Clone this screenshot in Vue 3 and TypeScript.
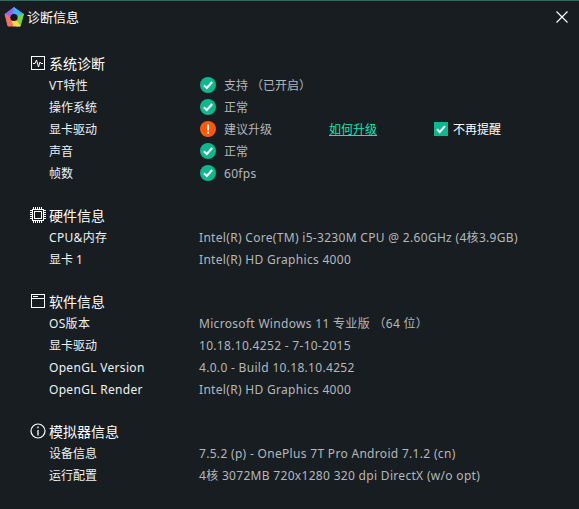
<script setup lang="ts">
interface Row { label: string; value: string; status?: 'ok' | 'warn'; latin?: boolean; labelLatin?: boolean }
interface Section { title: string; icon: string; rows: Row[] }
const sections: Section[] = [
  { title: '系统诊断', icon: 'pulse', rows: [
    { label: 'VT特性', value: '支持 （已开启）', status: 'ok', labelLatin: true },
    { label: '操作系统', value: '正常', status: 'ok' },
    { label: '显卡驱动', value: '建议升级', status: 'warn' },
    { label: '声音', value: '正常', status: 'ok' },
    { label: '帧数', value: '60fps', status: 'ok', latin: true },
  ] },
  { title: '硬件信息', icon: 'chip', rows: [
    { label: 'CPU&内存', value: 'Intel(R) Core(TM) i5-3230M CPU @ 2.60GHz (4核3.9GB)', latin: true, labelLatin: true },
    { label: '显卡 1', value: 'Intel(R) HD Graphics 4000', latin: true },
  ] },
  { title: '软件信息', icon: 'window', rows: [
    { label: 'OS版本', value: 'Microsoft Windows 11 专业版 （64 位）', latin: true, labelLatin: true },
    { label: '显卡驱动', value: '10.18.10.4252 - 7-10-2015', latin: true },
    { label: 'OpenGL Version', value: '4.0.0 - Build 10.18.10.4252', latin: true, labelLatin: true },
    { label: 'OpenGL Render', value: 'Intel(R) HD Graphics 4000', latin: true, labelLatin: true },
  ] },
  { title: '模拟器信息', icon: 'info', rows: [
    { label: '设备信息', value: '7.5.2 (p) - OnePlus 7T Pro Android 7.1.2 (cn)', latin: true },
    { label: '运行配置', value: '4核 3072MB 720x1280 320 dpi DirectX (w/o opt)', latin: true },
  ] },
]
</script>

<template>
  <div class="dialog">
    <header class="titlebar">
      <svg class="logo" width="22" height="22" viewBox="0 0 22 22" stroke-linejoin="round" stroke-width="1">
        <path d="M11 1.5 L2 8.2 L7 11 L11 7 Z" fill="#8f68f2" stroke="#8f68f2" />
        <path d="M11 1.5 L20.5 8.2 L15 10.5 L11 7 Z" fill="#3fb2ee" stroke="#3fb2ee" />
        <path d="M20.5 8.2 L17.2 20 L13 20 L15 10.5 Z" fill="#7bd13f" stroke="#7bd13f" />
        <path d="M17.2 20 L10 20 L8 15 L13 14 Z" fill="#f8d94a" stroke="#f8d94a" />
        <path d="M10 20 L5 20 L2 8.2 L7 11 L8 15 Z" fill="#f4716a" stroke="#f4716a" />
        <circle cx="11" cy="11.5" r="3.6" fill="#14181b" />
      </svg>
      <span class="title">诊断信息</span>
      <svg class="close" width="12" height="12" viewBox="0 0 12 12">
        <path d="M0.5 0.5 L11.5 11.5 M11.5 0.5 L0.5 11.5" stroke="#fff" stroke-width="1.2" fill="none" />
      </svg>
    </header>
    <main class="content">
      <section v-for="s in sections" :key="s.title" class="section">
        <div class="row head">
          <svg class="sec-icon" width="16" height="16" viewBox="0 0 16 16" fill="none" stroke="#fff">
            <template v-if="s.icon === 'pulse'">
              <rect x="1.5" y="1.5" width="13" height="13" />
              <path d="M3 8.5 H5 L6.5 5 L8.5 12 L10 7 L11 8.5 H13" stroke-width="1" />
            </template>
            <template v-else-if="s.icon === 'chip'">
              <rect x="2.5" y="2.5" width="11" height="11" />
              <rect x="4.5" y="4.5" width="7" height="7" />
              <path d="M3.5 0V2M5.5 0V2M7.5 0V2M9.5 0V2M11.5 0V2M3.5 14V16M5.5 14V16M7.5 14V16M9.5 14V16M11.5 14V16M0 3.5H2M0 5.5H2M0 7.5H2M0 9.5H2M0 11.5H2M14 3.5H16M14 5.5H16M14 7.5H16M14 9.5H16M14 11.5H16" />
            </template>
            <template v-else-if="s.icon === 'window'">
              <rect x="1.5" y="1.5" width="13" height="13" />
              <path d="M1.5 5.5 H14.5" />
              <path d="M3 3.5 H8" stroke-width="1" />
            </template>
            <template v-else>
              <circle cx="8" cy="8" r="7" stroke-width="1.2" />
              <path d="M8 7 V12.5 M8 3.5 V5.3" stroke-width="1.3" />
            </template>
          </svg>
          <span class="sec-title">{{ s.title }}</span>
        </div>
        <div v-for="r in s.rows" :key="r.label" class="row">
          <span class="label" :class="{ latin: r.labelLatin }">{{ r.label }}</span>
          <span v-if="r.status" class="status">
            <svg width="16" height="16" viewBox="0 0 16 16">
              <template v-if="r.status === 'ok'">
                <circle cx="8" cy="8" r="8" fill="#0fb78f" />
                <path d="M3.8 8.2 L6.8 11 L12.2 5" fill="none" stroke="#fff" stroke-width="2" />
              </template>
              <template v-else>
                <circle cx="8" cy="8" r="8" fill="#ff5a0a" />
                <path d="M8 3.5 V9.5 M8 10.8 V12.6" fill="none" stroke="#fff" stroke-width="2" />
              </template>
            </svg>
          </span>
          <span class="value" :class="{ hasicon: r.status, latin: r.latin }">{{ r.value }}</span>
          <template v-if="r.status === 'warn'">
            <a class="link">如何升级</a>
            <span class="check">
              <svg width="14" height="14" viewBox="0 0 14 14">
                <rect width="14" height="14" fill="#0fb78f" />
                <path d="M3 7.2 L5.8 10 L11 4.2" fill="none" stroke="#fff" stroke-width="2" />
              </svg>
              <span class="check-text">不再提醒</span>
            </span>
          </template>
        </div>
      </section>
    </main>
  </div>
</template>

<style scoped>
.dialog {
  width: 579px;
  height: 509px;
  box-sizing: border-box;
  background: #181d21;
  border-top: 1px solid #2f6b58;
  font-family: "Noto Sans", "Noto Sans CJK SC", sans-serif;
  color: #fff;
  overflow: hidden;
}
.titlebar {
  display: flex;
  align-items: center;
  height: 31px;
  padding: 0 11px 0 3px;
}
.logo { flex: none; }
.title { margin-left: 2px; font-size: 13px; }
.close { margin-left: auto; }
.content { padding: 20px 0 0 30px; }
.section { margin-bottom: 20px; }
.row {
  display: flex;
  align-items: center;
  height: 22px;
  font-size: 12px;
}
.head { font-size: 14px; }
.sec-icon { flex: none; width: 16px; margin-right: 3px; }
.sec-title { color: #fff; }
.label { width: 150px; margin-left: 19px; flex: none; color: #eef2f4; }
.latin { letter-spacing: 0.31px; }
.status { display: flex; width: 24px; flex: none; margin-left: 1px; }
.value { color: #b4b8bb; }
.value.hasicon { width: 105px; }
.link { color: #15e6b4; text-decoration: underline; width: 105px; flex: none; }
.check { display: flex; align-items: center; gap: 5px; }
.check-text { color: #fff; }
</style>
